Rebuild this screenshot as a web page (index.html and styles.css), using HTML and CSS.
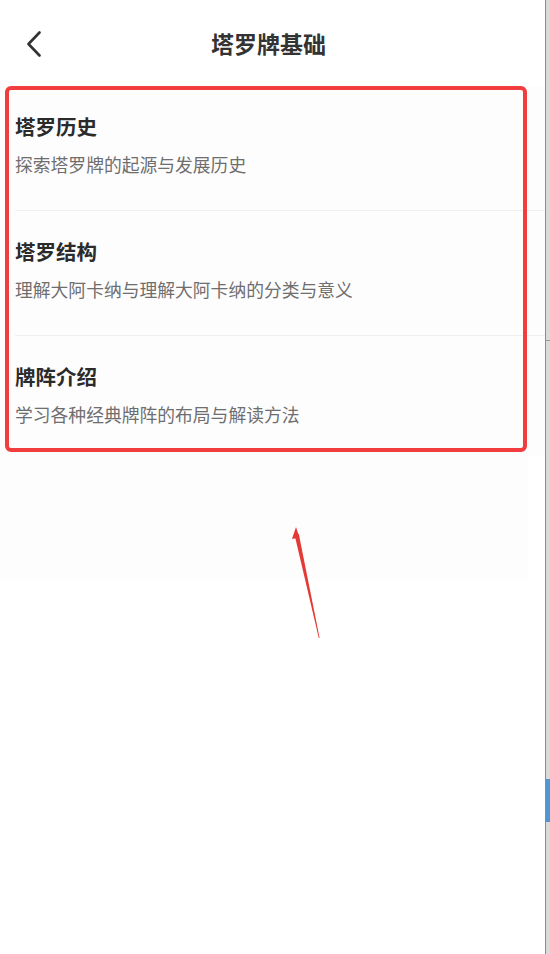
FILE: index.html
```html
<!DOCTYPE html>
<html lang="zh-CN">
<head>
<meta charset="utf-8">
<title>塔罗牌基础</title>
<link rel="stylesheet" href="styles.css">
</head>
<body>
<div class="app">
  <header class="nav">
    <button class="back" aria-label="返回">
      <svg width="16" height="26" viewBox="0 0 16 26"><path d="M13.5 1.5 L2.5 13 L13.5 24.5" fill="none" stroke="#333" stroke-width="2.6" stroke-linecap="round" stroke-linejoin="round"/></svg>
    </button>
    <h1 class="nav-title">塔罗牌基础</h1>
  </header>
  <main class="content">
    <ul class="list">
      <li class="item">
        <h2 class="item-title">塔罗历史</h2>
        <p class="item-desc">探索塔罗牌的起源与发展历史</p>
      </li>
      <li class="item">
        <h2 class="item-title">塔罗结构</h2>
        <p class="item-desc">理解大阿卡纳与理解大阿卡纳的分类与意义</p>
      </li>
      <li class="item">
        <h2 class="item-title">牌阵介绍</h2>
        <p class="item-desc">学习各种经典牌阵的布局与解读方法</p>
      </li>
    </ul>
    <div class="list-tail"></div>
    <div class="highlight"></div>
    <svg class="arrow" width="40" height="120" viewBox="0 0 40 120">
      <path d="M5 1 L1 13 L8.5 11.5 Z" fill="#e53935"/>
      <path d="M3.6 9 L27.8 112 L28.6 112 L7.8 8 Z" fill="#e53935"/>
    </svg>
  </main>
</div>
<aside class="strip">
  <div class="strip-mark"></div>
  <div class="strip-blue"></div>
</aside>
</body>
</html>
```
FILE: styles.css
```css
* { box-sizing: border-box; }
html, body { margin: 0; padding: 0; }
body {
  width: 550px;
  height: 954px;
  display: flex;
  background: #fff;
  font-family: "Noto Sans CJK SC", "Noto Sans", sans-serif;
  overflow: hidden;
}
.app {
  width: 545px;
  height: 954px;
  background: #fff;
  display: flex;
  flex-direction: column;
}
.nav {
  height: 86px;
  position: relative;
  display: flex;
  align-items: center;
  justify-content: center;
}
.back {
  position: absolute;
  left: 24px;
  top: 31px;
  width: 20px;
  height: 26px;
  padding: 0;
  border: 0;
  background: none;
  display: flex;
  align-items: center;
  justify-content: center;
}
.nav-title {
  margin: 0 0 0 -8px;
  font-size: 23px;
  font-weight: 700;
  color: #333;
  line-height: 30px;
}
.content {
  position: relative;
  flex: 1;
}
.list {
  list-style: none;
  margin: 0;
  padding: 0;
  background: #fefdfe;
}
.item {
  height: 125px;
  margin-left: 15px;
  padding-top: 26px;
  border-bottom: 1px solid #f1f0f1;
}
.item:last-child { border-bottom: 0; height: 120px; }
.item-title {
  margin: 0;
  font-size: 20.5px;
  font-weight: 700;
  color: #2b2b2b;
  line-height: 28px;
}
.item-desc {
  margin: 12px 0 0;
  font-size: 17.8px;
  color: #6e6e6e;
  line-height: 24px;
}
.list-tail {
  width: 528px;
  height: 125px;
  background: #fdfdfd;
}
.highlight {
  position: absolute;
  left: 5px;
  top: 0;
  width: 522px;
  height: 366px;
  border: 4px solid #f23d3f;
  border-radius: 6px;
  pointer-events: none;
}
.arrow {
  position: absolute;
  left: 291px;
  top: 440px;
}
.strip {
  width: 5px;
  height: 954px;
  background: #dadada;
  border-left: 1px solid #8c8c8c;
  display: flex;
  flex-direction: column;
}
.strip-mark {
  height: 1px;
  margin-top: 340px;
  background: #9a9a9a;
}
.strip-blue {
  height: 43px;
  margin-top: 438px;
  background: #4f97d2;
}
```
